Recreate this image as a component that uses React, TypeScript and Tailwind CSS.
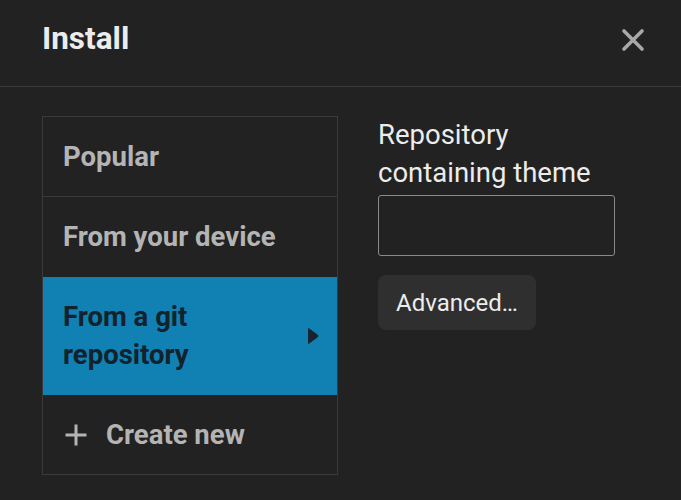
export default function App() {
  return (
    <main
      className="w-[681px] h-[500px] bg-[#222222] overflow-hidden"
      style={{ fontFamily: "Roboto, 'Noto Sans', sans-serif" }}
    >
      {/* header */}
      <header className="h-[87px] flex items-center justify-between pl-[42px] pr-[36px] border-b border-[#3b3b3b]">
        <h1 className="text-[31.5px] font-bold text-[#ececec] -mt-[8px]">Install</h1>
        <button className="w-[24px] h-[24px] -mt-[6px]" aria-label="Close">
          <svg viewBox="0 0 24 24" className="w-[24px] h-[24px]">
            <path
              d="M3 3 L21 21 M21 3 L3 21"
              stroke="#a8a8a8"
              strokeWidth="3.6"
              strokeLinecap="round"
            />
          </svg>
        </button>
      </header>

      <div className="flex gap-[40px] pl-[42px] pt-[29px]">
        {/* sources list */}
        <nav className="w-[296px] border border-[#3a3a3a] flex flex-col">
          <div className="h-[80px] flex items-center px-[20px] border-b border-[#3a3a3a] text-[27.5px] font-bold text-[#b4b4b4]">
            Popular
          </div>
          <div className="h-[80px] flex items-center px-[20px] text-[27.5px] font-bold text-[#b4b4b4]">
            From your device
          </div>
          <div className="h-[118px] flex items-center justify-between pl-[20px] pr-[18px] bg-[#1180b2] text-[27.5px] font-bold text-[#13222c] leading-[38px]">
            <span>
              From a git
              <br />
              repository
            </span>
            <svg viewBox="0 0 12 18" className="w-[12px] h-[18px]">
              <path d="M1.5 1.5 L10.5 8 Q11.5 9 10.5 10 L1.5 16.5 Z" fill="#172430" stroke="#172430" strokeLinejoin="round" />
            </svg>
          </div>
          <div className="h-[79px] flex items-center gap-[18px] px-[21px] text-[27.5px] font-bold text-[#b4b4b4]">
            <svg viewBox="0 0 24 24" className="w-[24px] h-[24px]">
              <path d="M12 1.5 V22.5 M1.5 12 H22.5" stroke="#b4b4b4" strokeWidth="3" />
            </svg>
            Create new
          </div>
        </nav>

        {/* git repository form */}
        <section className="flex flex-col items-start">
          <label className="text-[27.5px] leading-[38px] text-[#ececec]">
            Repository
            <br />
            containing theme
          </label>
          <input
            type="text"
            className="mt-[3px] w-[237px] h-[61px] bg-[#222222] border-[1.5px] border-[#8a8a8a] rounded-[3px] outline-none"
          />
          <button className="mt-[19px] h-[55px] px-[18px] bg-[#2f2f2f] rounded-[8px] text-[24px] text-[#ececec]">
            Advanced…
          </button>
        </section>
      </div>
    </main>
  );
}
